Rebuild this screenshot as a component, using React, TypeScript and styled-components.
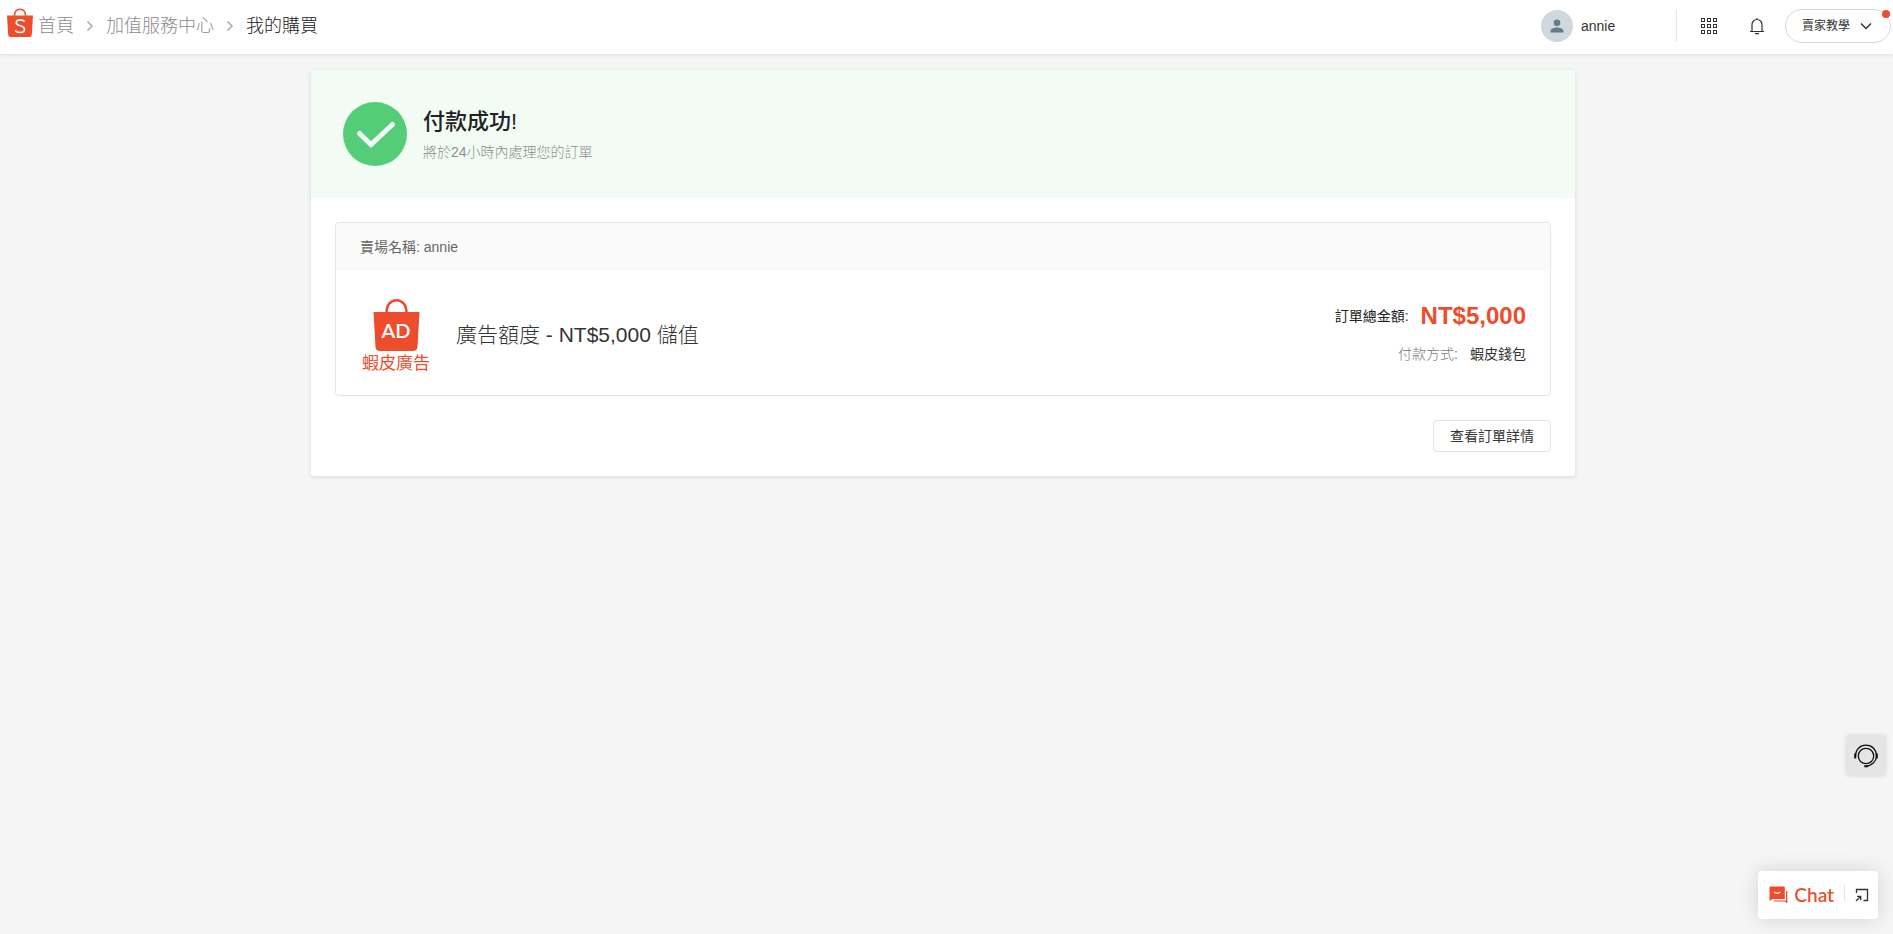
import React from 'react';
import styled, { createGlobalStyle } from 'styled-components';

const brand = '#ee4d2d';
const border = '#e5e5e5';

const GlobalStyle = createGlobalStyle`
  *, *::before, *::after { box-sizing: border-box; }
  body {
    margin: 0;
    background: #f5f5f5;
    color: #333333;
    font-family: "Liberation Sans", "Noto Sans CJK TC", sans-serif;
    font-size: 14px;
    line-height: 20px;
  }
  button { font: inherit; color: inherit; margin: 0; padding: 0; cursor: pointer; }
  a { color: inherit; text-decoration: none; }
  h1, h2, p, dl, dt, dd, ol { margin: 0; padding: 0; font-weight: 400; }
  svg { display: block; flex: none; }
`;

const Header = styled.header`
  display: flex;
  align-items: center;
  justify-content: space-between;
  height: 54px;
  padding: 0 2px 2px 6px;
  background: #ffffff;
  box-shadow: 0 1px 4px rgba(0, 0, 0, 0.1);
`;

const Breadcrumb = styled.nav`
  display: flex;
  align-items: center;
  gap: 4px;
`;

const HomeLink = styled.a`
  display: block;
  padding-bottom: 6px;
`;

const Crumbs = styled.ol`
  display: flex;
  align-items: center;
  gap: 12px;
  list-style: none;
`;

const Crumb = styled.li<{ $current?: boolean }>`
  display: flex;
  align-items: center;
  gap: 12px;
  font-size: 18px;
  line-height: 24px;
  font-weight: 300;
  color: ${(p) => (p.$current ? '#222222' : '#8c8c8c')};
`;

const HeaderActions = styled.div`
  display: flex;
  align-items: center;
`;

const Account = styled.button`
  display: flex;
  align-items: center;
  gap: 8px;
  width: 136px;
  height: 32px;
  border: 0;
  border-right: 1px solid ${border};
  background: none;
`;

const IconButton = styled.button`
  display: flex;
  align-items: center;
  justify-content: center;
  width: 48px;
  height: 32px;
  border: 0;
  background: none;
`;

const IconGroup = styled.div`
  display: flex;
  padding: 0 4px 0 8px;
`;

const GuideButton = styled.button`
  position: relative;
  display: flex;
  align-items: center;
  gap: 10px;
  height: 34px;
  padding: 0 18px 0 16px;
  border: 1px solid #d8d8d8;
  border-radius: 17px;
  background: #ffffff;
  font-size: 12px;
`;

const Dot = styled.span`
  position: absolute;
  top: 0;
  right: 0;
  width: 8px;
  height: 8px;
  border-radius: 50%;
  background: ${brand};
`;

const Main = styled.main`
  padding: 16px 7px 16px 0;
`;

const Card = styled.section`
  max-width: 1264px;
  margin: 0 auto;
  background: #ffffff;
  border-radius: 3px;
  box-shadow: 0 1px 4px rgba(0, 0, 0, 0.12);
  overflow: hidden;
`;

const Banner = styled.div`
  display: flex;
  align-items: center;
  gap: 16px;
  padding: 32px;
  background: #f2fcf5;
`;

const BannerText = styled.div`
  display: flex;
  flex-direction: column;
  gap: 6px;
  padding-top: 2px;
`;

const BannerTitle = styled.h1`
  color: #222222;
  font-size: 22px;
  line-height: 28px;
  font-weight: 500;
`;

const BannerNote = styled.p`
  color: #8c8c8c;
  font-weight: 300;
`;

const CardBody = styled.div`
  display: flex;
  flex-direction: column;
  align-items: stretch;
  gap: 24px;
  padding: 24px;
`;

const Order = styled.article`
  border: 1px solid ${border};
  border-radius: 4px;
  overflow: hidden;
`;

const ShopName = styled.p`
  padding: 14px 24px;
  background: #fafafa;
  color: #666666;
`;

const OrderRow = styled.div`
  display: flex;
  align-items: center;
  gap: 24px;
  padding: 22px 24px;
`;

const ProductName = styled.h2`
  flex: 1;
  padding-top: 4px;
  font-size: 21px;
  line-height: 28px;
  font-weight: 300;
`;

const Summary = styled.dl`
  display: flex;
  flex-direction: column;
  gap: 14px;
`;

const SummaryLine = styled.div<{ $muted?: boolean }>`
  display: flex;
  align-items: center;
  justify-content: flex-end;
  gap: 12px;
  dt { color: ${(p) => (p.$muted ? '#777777' : '#222222')}; font-weight: ${(p) => (p.$muted ? 300 : 400)}; }
`;

const Price = styled.dd`
  color: ${brand};
  font-size: 24px;
  line-height: 28px;
  font-weight: 700;
`;

const DetailButton = styled.button`
  align-self: flex-end;
  height: 32px;
  padding: 0 16px;
  border: 1px solid ${border};
  border-radius: 4px;
  background: #ffffff;
`;

const HelpButton = styled.button`
  position: fixed;
  right: 7px;
  bottom: 158px;
  display: flex;
  align-items: center;
  justify-content: center;
  width: 40px;
  height: 41px;
  border: 0;
  border-radius: 4px;
  background: #e5e5e5;
  box-shadow: 0 0 4px rgba(0, 0, 0, 0.12);
`;

const ChatBar = styled.div`
  position: fixed;
  right: 15px;
  bottom: 15px;
  display: flex;
  align-items: center;
  height: 48px;
  padding: 0 9px 0 11px;
  border-radius: 4px;
  background: #ffffff;
  box-shadow: 0 0 20px rgba(0, 0, 0, 0.14);
`;

const ChatButton = styled.button`
  display: flex;
  align-items: center;
  gap: 6px;
  padding-right: 10px;
  border: 0;
  background: none;
  color: ${brand};
  font-family: Lato, "Liberation Sans", sans-serif;
  font-size: 19px;
  font-weight: 600;
  line-height: 24px;
`;

const ExpandButton = styled.button`
  display: flex;
  padding-left: 10px;
  border: 0;
  background: none;
`;

const ChatDivider = styled.span`
  width: 1px;
  height: 16px;
  margin-bottom: 4px;
  background: ${border};
`;

const ShopLogo = () => (
  <svg width="28" height="30" viewBox="0 0 28 30" aria-hidden="true">
    <path d="M8.5 8C8.5 4 10.500 1.200 14 1.200S19.500 4 19.500 8" fill="none" stroke={brand} strokeWidth="1.500" />
    <path d="M1 7.500h26l-1.200 19.300a2.300 2.300 0 0 1-2.300 2.200H4.500a2.300 2.300 0 0 1-2.300-2.200z" fill={brand} />
    <path
      d="M18 13.200c-1.200-.9-2.500-1.300-4-1.300-2.200 0-3.700 1.100-3.700 2.800 0 3.900 8.200 2.300 8.200 6.500 0 2-1.700 3.300-4.200 3.300-1.900 0-3.400-.6-4.700-1.700"
      fill="none"
      stroke="#ffffff"
      strokeWidth="1.600"
      strokeLinecap="round"
    />
  </svg>
);

const CrumbArrow = () => (
  <svg width="8" height="12" viewBox="0 0 8 12" aria-hidden="true">
    <path d="M1.500 1.500L6 6L1.500 10.500" fill="none" stroke="#aaaaaa" strokeWidth="1.500" />
  </svg>
);

const Avatar = () => (
  <svg width="32" height="32" viewBox="0 0 32 32" aria-hidden="true">
    <circle cx="16" cy="16" r="16" fill="#cfd8dc" />
    <circle cx="16" cy="12.800" r="3.300" fill="#607d8b" />
    <path d="M9.500 22.500v-1.500c0-2.400 4.300-3.500 6.500-3.500s6.500 1.100 6.500 3.500v1.500z" fill="#607d8b" />
  </svg>
);

const GridIcon = () => (
  <svg width="16" height="16" viewBox="0 0 16 16" fill="none" stroke="#333333" aria-hidden="true">
    {[0, 6, 12].map((y) =>
      [0, 6, 12].map((x) => <rect key={`${x}-${y}`} x={x + 0.5} y={y + 0.5} width="3" height="3" />)
    )}
  </svg>
);

const BellIcon = () => (
  <svg width="16" height="18" viewBox="0 0 16 18" fill="none" stroke="#333333" strokeWidth="1.200" aria-hidden="true">
    <path d="M1 14.500h14M3 14.500V7.500a5 5 0 0 1 10 0v7" />
    <path d="M8 2.500V1.200M6 16.700h4" />
  </svg>
);

const DownArrow = () => (
  <svg width="12" height="8" viewBox="0 0 12 8" aria-hidden="true">
    <path d="M1 1.500L6 6.500L11 1.500" fill="none" stroke="#333333" strokeWidth="1.400" />
  </svg>
);

const SuccessIcon = () => (
  <svg width="64" height="64" viewBox="0 0 64 64" aria-hidden="true">
    <circle cx="32" cy="32" r="32" fill="#55cc77" />
    <path d="M16.500 31.500L28 42.500L49.500 22.500" fill="none" stroke="#f2fcf5" strokeWidth="5" strokeLinecap="round" />
  </svg>
);

const AdLogo = () => (
  <svg width="72" height="80" viewBox="0 0 72 80" role="img" aria-label="蝦皮廣告">
    <path d="M26.500 20C26.500 11.500 31 7.200 36.500 7.200S46.500 11.500 46.500 20" fill="none" stroke={brand} strokeWidth="2.500" />
    <path d="M13.500 19h46l-2 35a4.500 4.500 0 0 1-4.500 4H20a4.500 4.500 0 0 1-4.500-4z" fill={brand} />
    <text x="36" y="45" textAnchor="middle" fill="#ffffff" fontFamily="Lato, sans-serif" fontSize="20" fontWeight="600">
      AD
    </text>
    <text x="36" y="76" textAnchor="middle" fill={brand} fontFamily="'Noto Sans CJK TC', sans-serif" fontSize="17">
      蝦皮廣告
    </text>
  </svg>
);

const HeadsetIcon = () => (
  <svg width="26" height="26" viewBox="0 0 26 26" fill="none" stroke="#111111" aria-hidden="true">
    <circle cx="13" cy="13" r="7.700" strokeWidth="1.300" />
    <path d="M2.500 13.500C2.500 6.500 7 2.200 13 2.200S23.500 6.500 23.500 13.500C23 18.500 19 22.500 13 23.200" strokeWidth="1.300" />
    <path d="M2.200 10.500v5M23.800 10.500v5M11.200 23.300h4" strokeWidth="2" />
  </svg>
);

const ChatIcon = () => (
  <svg width="19" height="18" viewBox="0 0 19 18" aria-hidden="true">
    <path d="M1.200 0.500h13.600a1 1 0 0 1 1 1v11.500H3.500L0.500 15V1.500a1 1 0 0 1 .7-1z" fill={brand} />
    <path d="M17 5h1.300v12.500l-2.500-2H5.500a1 1 0 0 1-1-1H17z" fill={brand} />
    <path d="M5 6c2 1.700 4.300 1.700 6.300 0" fill="none" stroke="#ffffff" strokeWidth="1.100" />
  </svg>
);

const ExpandIcon = () => (
  <svg width="14" height="14" viewBox="0 0 14 14" fill="none" stroke="#333333" strokeWidth="1.300" aria-hidden="true">
    <path d="M1.500 5V1.500H12.500V12.500H8.500" />
    <path d="M1 13L5.500 8.500M2 8.300h3.700V12" />
  </svg>
);

export default function App() {
  return (
    <>
      <GlobalStyle />
      <Header>
        <Breadcrumb aria-label="breadcrumb">
          <HomeLink href="#" aria-label="Shopee">
            <ShopLogo />
          </HomeLink>
          <Crumbs>
            <Crumb><a href="#">首頁</a><CrumbArrow /></Crumb>
            <Crumb><a href="#">加值服務中心</a><CrumbArrow /></Crumb>
            <Crumb $current aria-current="page">我的購買</Crumb>
          </Crumbs>
        </Breadcrumb>
        <HeaderActions>
          <Account><Avatar />annie</Account>
          <IconGroup>
            <IconButton aria-label="應用程式"><GridIcon /></IconButton>
            <IconButton aria-label="通知"><BellIcon /></IconButton>
          </IconGroup>
          <GuideButton>賣家教學<DownArrow /><Dot /></GuideButton>
        </HeaderActions>
      </Header>
      <Main>
        <Card>
          <Banner>
            <SuccessIcon />
            <BannerText>
              <BannerTitle>付款成功!</BannerTitle>
              <BannerNote>將於24小時內處理您的訂單</BannerNote>
            </BannerText>
          </Banner>
          <CardBody>
            <Order>
              <ShopName>賣場名稱: annie</ShopName>
              <OrderRow>
                <AdLogo />
                <ProductName>廣告額度 - NT$5,000 儲值</ProductName>
                <Summary>
                  <SummaryLine><dt>訂單總金額:</dt><Price>NT$5,000</Price></SummaryLine>
                  <SummaryLine $muted><dt>付款方式:</dt><dd>蝦皮錢包</dd></SummaryLine>
                </Summary>
              </OrderRow>
            </Order>
            <DetailButton>查看訂單詳情</DetailButton>
          </CardBody>
        </Card>
      </Main>
      <HelpButton aria-label="客服"><HeadsetIcon /></HelpButton>
      <ChatBar>
        <ChatButton><ChatIcon />Chat</ChatButton>
        <ChatDivider />
        <ExpandButton aria-label="展開"><ExpandIcon /></ExpandButton>
      </ChatBar>
    </>
  );
}
